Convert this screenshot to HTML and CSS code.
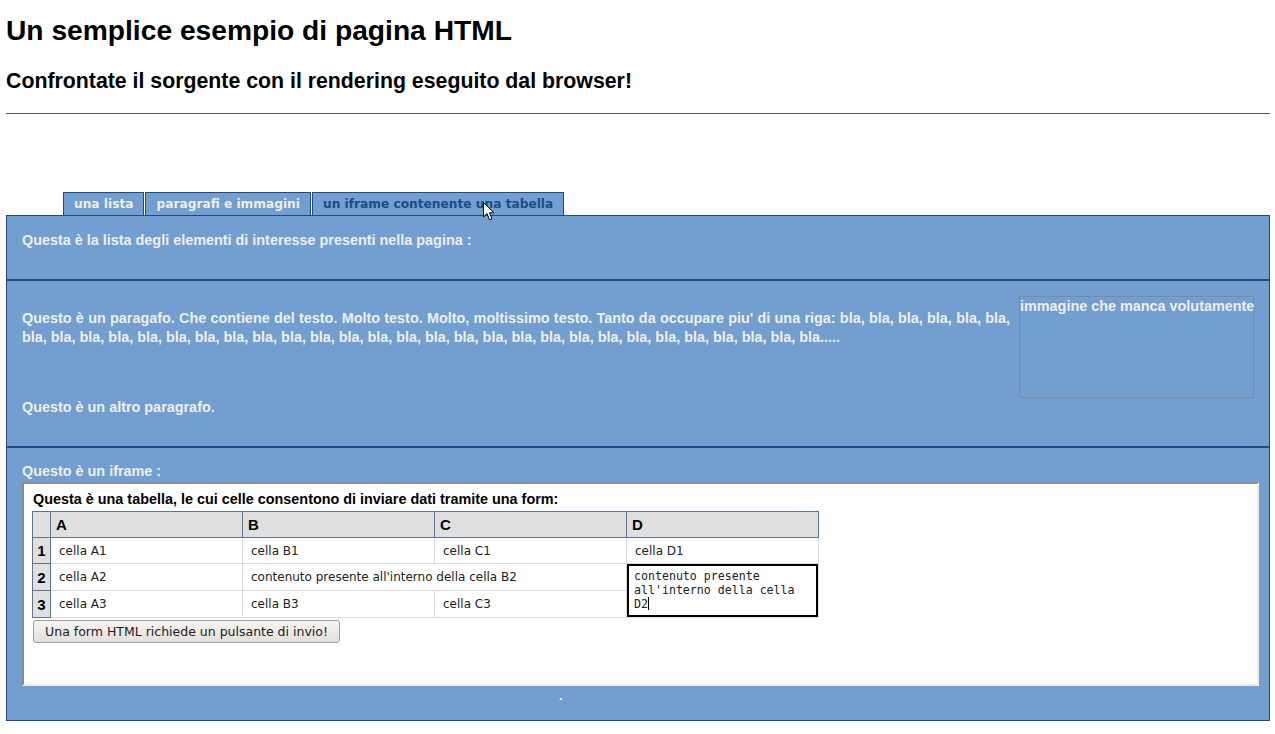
FILE: index.html
```html
<!DOCTYPE html>
<html lang="it">
<head>
<meta charset="utf-8">
<title>Un semplice esempio di pagina HTML</title>
<link rel="stylesheet" href="styles.css">
</head>
<body>
<h1 class="title">Un semplice esempio di pagina HTML</h1>
<h2 class="subtitle">Confrontate il sorgente con il rendering eseguito dal browser!</h2>
<hr class="rule">
<nav class="tabs">
  <a class="tab">una lista</a>
  <a class="tab">paragrafi e immagini</a>
  <a class="tab tab-active">un iframe contenente una tabella</a>
  <svg class="cursor" width="13" height="19" viewBox="0 0 13 19"><path d="M0.5 0.5 L0.5 15 L4 11.6 L6.6 17.8 L9 16.8 L6.5 10.8 L11 10.8 Z" fill="#fff" stroke="#000" stroke-width="1" stroke-linejoin="miter"/></svg>
</nav>
<main class="panel">
  <section class="sec sec-list">
    <p class="txt">Questa è la lista degli elementi di interesse presenti nella pagina :</p>
  </section>
  <section class="sec sec-para">
    <div class="img-missing">immagine che manca volutamente</div>
    <p class="txt para1">Questo è un paragafo. Che contiene del testo. Molto testo. Molto, moltissimo testo. Tanto da occupare piu' di una riga: bla, bla, bla, bla, bla, bla, bla, bla, bla, bla, bla, bla, bla, bla, bla, bla, bla, bla, bla, bla, bla, bla, bla, bla, bla, bla, bla, bla, bla, bla, bla, bla, bla, bla.....</p>
    <p class="txt para2">Questo è un altro paragrafo.</p>
  </section>
  <section class="sec sec-frame">
    <p class="txt">Questo è un iframe :</p>
    <div class="frame">
      <p class="caption">Questa è una tabella, le cui celle consentono di inviare dati tramite una form:</p>
      <table class="grid">
        <colgroup>
          <col class="c-num"><col class="c-data"><col class="c-data"><col class="c-data"><col class="c-data">
        </colgroup>
        <tr class="head">
          <th class="corner"></th><th>A</th><th>B</th><th>C</th><th>D</th>
        </tr>
        <tr>
          <th class="num">1</th><td>cella A1</td><td>cella B1</td><td>cella C1</td><td>cella D1</td>
        </tr>
        <tr>
          <th class="num">2</th><td>cella A2</td><td colspan="2">contenuto presente all'interno della cella B2</td>
          <td rowspan="2" class="edit-cell"><div class="editor">contenuto presente all'interno della cella D2<span class="caret"></span></div></td>
        </tr>
        <tr>
          <th class="num">3</th><td>cella A3</td><td>cella B3</td><td>cella C3</td>
        </tr>
      </table>
      <button class="submit" type="button">Una form HTML richiede un pulsante di invio!</button>
    </div>
    <div class="frame-foot">.</div>
  </section>
</main>
</body>
</html>
```

FILE: styles.css
```css
html, body {
  background: #fff;
}
body {
  margin: 0 5px 0 6px;
  font-family: "Liberation Sans", Arial, sans-serif;
  color: #000;
}
.title {
  margin: 14px 0 0;
  font-size: 28.2px;
  line-height: 32px;
  font-weight: bold;
}
.subtitle {
  margin: 23px 0 0;
  font-size: 21.3px;
  line-height: 24px;
  font-weight: bold;
}
.rule {
  margin: 20px 0 0;
  border: 0;
  border-top: 1px solid #555;
  height: 0;
}
.tabs {
  position: relative;
  display: flex;
  gap: 1px;
  margin-top: 78px;
  padding-left: 57px;
  height: 23px;
}
.tab {
  display: block;
  box-sizing: border-box;
  height: 23px;
  padding: 0 10px;
  border: 1px solid #204a87;
  border-bottom: 0;
  background: #729fcf;
  color: #eeeeec;
  font-family: "DejaVu Sans", sans-serif;
  font-weight: bold;
  font-size: 12.2px;
  line-height: 22px;
}
.tab-active {
  color: #204a87;
}
.cursor {
  position: absolute;
  left: 477px;
  top: 10px;
}
.panel {
  display: block;
  border: 1px solid #204a87;
  background: #729fcf;
  color: #eeeeec;
}
.sec {
  border-bottom: 2px solid #204a87;
}
.sec:last-child {
  border-bottom: 0;
}
.txt {
  margin: 0;
  font-size: 14.4px;
  line-height: 19px;
  font-weight: bold;
}
.sec-list {
  padding: 15px 15px 29px 15px;
}
.sec-para {
  padding: 15px 15px 29px 15px;
}
.img-missing {
  float: right;
  box-sizing: border-box;
  width: 235px;
  height: 102px;
  margin-left: 9px;
  border: 1px solid #888;
  font-size: 14.4px;
  line-height: 19px;
  font-weight: bold;
  white-space: nowrap;
}
.para1 {
  margin-top: 13px;
  text-align: justify;
}
.para2 {
  clear: both;
}
.sec-frame {
  padding: 14px 10px 15px 15px;
}
.frame {
  box-sizing: border-box;
  width: 1237px;
  height: 204px;
  margin-top: 1px;
  padding: 8px;
  background: #fff;
  border-style: solid;
  border-width: 2px;
  border-color: #8c8c8c #ececec #ececec #8c8c8c;
  color: #000;
}
.caption {
  margin: 0 0 4px 1px;
  font-size: 14.4px;
  line-height: 15px;
  font-weight: bold;
}
.grid {
  border-collapse: collapse;
  table-layout: fixed;
  width: 787px;
  font-family: "DejaVu Sans", sans-serif;
  font-size: 12px;
}
.c-num { width: 18px; }
.c-data { width: 192px; }
.grid th, .grid td {
  height: 26px;
  padding: 0;
  box-sizing: border-box;
}
.grid td {
  border: 1px solid #dcdcdc;
  padding-left: 8px;
  color: #222;
  white-space: nowrap;
}
.grid th {
  background: #e0e0e0;
  border: 1px solid #5d7391;
  font-family: "Liberation Sans", Arial, sans-serif;
  font-weight: bold;
  font-size: 15px;
  text-align: left;
  padding-left: 5px;
}
.grid .num {
  text-align: center;
  padding: 0;
}
.grid .edit-cell {
  padding: 0;
  border: 1px solid #dcdcdc;
  vertical-align: top;
}
.editor {
  box-sizing: border-box;
  width: 100%;
  height: 53px;
  border: 2px solid #000;
  padding: 3px 5px;
  font-family: "DejaVu Sans Mono", monospace;
  font-size: 11.6px;
  line-height: 14px;
  color: #222;
  white-space: normal;
  background: #fff;
}
.caret {
  display: inline-block;
  width: 1px;
  height: 13px;
  background: #000;
  vertical-align: -2px;
}
.submit {
  display: block;
  margin: 2px 0 0 1px;
  box-sizing: border-box;
  width: 307px;
  height: 23px;
  padding: 0;
  border: 1px solid #a29d96;
  border-radius: 3px;
  background: linear-gradient(#f6f4f2, #e4e0db);
  font-family: "DejaVu Sans", sans-serif;
  font-size: 12.5px;
  color: #222;
}
.frame-foot {
  padding-left: 537px;
  font-size: 13px;
  line-height: 19px;
  font-weight: bold;
  color: #fff;
}
```
